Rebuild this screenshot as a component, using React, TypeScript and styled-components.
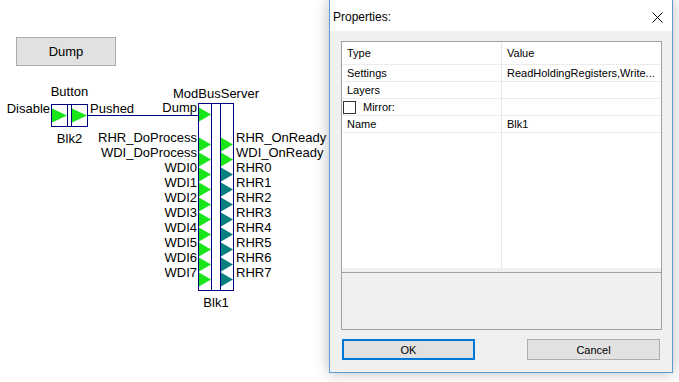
import styled, { createGlobalStyle } from "styled-components";

const GREEN = "#19e619";
const TEAL = "#088080";
const NAVY = "#000080";

const GlobalStyle = createGlobalStyle`
	html, body {
		margin: 0;
		padding: 0;
		background: #fff;
	}
	body {
		font-family: "Liberation Sans", Arial, sans-serif;
	}
`;

const Canvas = styled.div`
	position: relative;
	width: 679px;
	height: 382px;
	overflow: hidden;
	background: #fff;
	color: #000;
`;

const DumpButton = styled.button`
	position: absolute;
	left: 16px;
	top: 37px;
	width: 100px;
	height: 29px;
	padding: 0;
	background: #e1e1e1;
	border: 1px solid #adadad;
	color: #000;
	font: 13px "Liberation Sans", Arial, sans-serif;
`;

/* ---------- diagram blocks ---------- */

const BlockRoot = styled.div<{ $x: number; $y: number }>`
	position: absolute;
	left: ${p => p.$x}px;
	top: ${p => p.$y}px;
	font: 13px/15px "Liberation Sans", Arial, sans-serif;
	white-space: nowrap;
`;

const Caption = styled.div<{ $offset: number; $width: number; $gap?: number; $top?: number }>`
	display: flex;
	justify-content: center;
	height: 15px;
	width: ${p => p.$width}px;
	margin-left: ${p => p.$offset}px;
	margin-bottom: ${p => p.$gap ?? 0}px;
	margin-top: ${p => p.$top ?? 0}px;
`;

const Body = styled.div`
	display: flex;
	align-items: flex-start;
`;

const LabelCol = styled.div<{ $width?: number; $side: "left" | "right" }>`
	display: flex;
	flex-direction: column;
	width: ${p => (p.$width ? `${p.$width}px` : "auto")};
	text-align: ${p => p.$side === "left" ? "right" : "left"};
	margin-right: ${p => p.$side === "left" ? 1 : 0}px;
	margin-left: ${p => p.$side === "right" ? 2 : 0}px;
`;

const Label = styled.div`
	height: 15px;
`;

const Box = styled.div`
	display: flex;
	margin-top: 3px;
	border: 1px solid ${NAVY};
`;

const Cell = styled.div<{ $w: number; $divider?: boolean }>`
	display: flex;
	flex-direction: column;
	width: ${p => p.$w}px;
	padding: 3px 0;
	border-right: ${p => p.$divider ? `1px solid ${NAVY}` : "none"};
`;

const PinSlot = styled.div`
	display: flex;
	height: 15px;
`;

const Wire = styled.div`
	position: absolute;
	left: 87px;
	top: 115px;
	width: 111px;
	height: 1px;
	background: ${NAVY};
`;

type Pin = { label: string; color: string } | null;

const Triangle = ({ w, color }: { w: number; color: string }) => (
	<svg width={w} height={15} viewBox={`0 0 ${w} 15`}>
		<polygon points={`0,0.5 ${w},7.5 0,14.5`} fill={color} />
	</svg>
);

type BlockProps = {
	x: number;
	y: number;
	title: string;
	name: string;
	labelWidth: number;
	cols: [number, number, number];
	inputs: Pin[];
	outputs: Pin[];
	titleGap?: number;
};

const Block = ({ x, y, title, name, labelWidth, cols, inputs, outputs, titleGap }: BlockProps) => {
	const rows = Math.max(inputs.length, outputs.length);
	const boxWidth = cols[0] + cols[1] + cols[2] + 4;
	const offset = labelWidth + 1;
	const idx = Array.from({ length: rows }, (_, i) => i);

	return (
		<BlockRoot $x={x} $y={y}>
			<Caption $offset={offset} $width={boxWidth} $gap={titleGap}>{title}</Caption>
			<Body>
				<LabelCol $side="left" $width={labelWidth}>
					{idx.map(i => <Label key={i}>{inputs[i]?.label ?? ""}</Label>)}
				</LabelCol>
				<Box>
					<Cell $w={cols[0]} $divider>
						{idx.map(i => (
							<PinSlot key={i}>{inputs[i] && <Triangle w={cols[0]} color={inputs[i]!.color} />}</PinSlot>
						))}
					</Cell>
					<Cell $w={cols[1]} $divider />
					<Cell $w={cols[2]}>
						{idx.map(i => (
							<PinSlot key={i}>{outputs[i] && <Triangle w={cols[2]} color={outputs[i]!.color} />}</PinSlot>
						))}
					</Cell>
				</Box>
				<LabelCol $side="right">
					{idx.map(i => <Label key={i}>{outputs[i]?.label ?? ""}</Label>)}
				</LabelCol>
			</Body>
			<Caption $offset={offset} $width={boxWidth} $top={4}>{name}</Caption>
		</BlockRoot>
	);
};

const green = (label: string): Pin => ({ label, color: GREEN });
const teal = (label: string): Pin => ({ label, color: TEAL });

const modbusInputs: Pin[] = [
	green("Dump"),
	null,
	green("RHR_DoProcess"),
	green("WDI_DoProcess"),
	...Array.from({ length: 8 }, (_, i) => green(`WDI${i}`)),
];

const modbusOutputs: Pin[] = [
	null,
	null,
	green("RHR_OnReady"),
	green("WDI_OnReady"),
	...Array.from({ length: 8 }, (_, i) => teal(`RHR${i}`)),
];

/* ---------- properties dialog ---------- */

const Window = styled.div`
	position: absolute;
	left: 329px;
	top: -1px;
	width: 344px;
	height: 374px;
	box-sizing: border-box;
	display: flex;
	flex-direction: column;
	background: #f0f0f0;
	border: 1px solid #5b9bd5;
	box-shadow: 0 0 14px rgba(0, 0, 0, 0.28);
	font-family: "Liberation Sans", Arial, sans-serif;
`;

const TitleBar = styled.div`
	display: flex;
	align-items: center;
	justify-content: space-between;
	height: 31px;
	box-sizing: border-box;
	padding: 3px 0 0 3px;
	background: #fff;
	font-size: 12px;
`;

const CloseBtn = styled.div`
	display: flex;
	align-items: center;
	justify-content: center;
	width: 30px;
	height: 28px;
`;

const WinBody = styled.div`
	flex: 1;
	display: flex;
	flex-direction: column;
	padding: 10px 10px 12px 11px;
`;

const Panel = styled.div`
	display: flex;
	flex-direction: column;
	height: 289px;
	box-sizing: border-box;
	border: 1px solid #a0a0a0;
	background: #f0f0f0;
`;

const PropGrid = styled.div`
	display: grid;
	grid-template-columns: 159px 1fr;
	align-content: start;
	height: 226px;
	background: linear-gradient(#e6e6e6, #e6e6e6) 159px 0 / 1px 100% no-repeat, #fff;
	font-size: 11px;
`;

const PropCell = styled.div<{ $head?: boolean; $value?: boolean; $tight?: boolean }>`
	display: flex;
	align-items: center;
	gap: 7px;
	height: ${p => p.$head ? 22 : 16}px;
	padding-left: ${p => p.$tight ? 1 : p.$value ? 6 : 5}px;
	border-bottom: 1px solid #ececec;
	white-space: nowrap;
	overflow: hidden;
`;

const CheckBox = styled.span`
	width: 13px;
	height: 13px;
	box-sizing: border-box;
	border: 1px solid #333;
	background: #fff;
`;

const Description = styled.div`
	flex: 1;
	margin-top: 4px;
	border-top: 1px solid #a0a0a0;
`;

const Footer = styled.div`
	display: flex;
	justify-content: space-between;
	margin-top: 9px;
	padding: 0 2px 0 1px;
`;

const DlgButton = styled.button<{ $default?: boolean }>`
	width: 133px;
	height: 21px;
	padding: 0;
	box-sizing: border-box;
	background: #e1e1e1;
	border: ${p => p.$default ? "2px solid #0078d7" : "1px solid #adadad"};
	color: #000;
	font: 11px "Liberation Sans", Arial, sans-serif;
`;

const props: [string, string][] = [
	["Settings", "ReadHoldingRegisters,Write..."],
	["Layers", ""],
];

export default function App() {
	return (
		<Canvas>
			<GlobalStyle />
			<DumpButton>Dump</DumpButton>

			<Block
				x={2}
				y={84}
				title="Button"
				name="Blk2"
				labelWidth={48}
				cols={[15, 3, 15]}
				inputs={[green("Disable")]}
				outputs={[green("Pushed")]}
				titleGap={2}
			/>
			<Wire />
			<Block
				x={86}
				y={86}
				title="ModBusServer"
				name="Blk1"
				labelWidth={111}
				cols={[12, 8, 12]}
				inputs={modbusInputs}
				outputs={modbusOutputs}
				titleGap={-1}
			/>

			<Window>
				<TitleBar>
					<span>Properties:</span>
					<CloseBtn>
						<svg width="11" height="11" viewBox="0 0 11 11">
							<path d="M0.5 0.5 L10.5 10.5 M10.5 0.5 L0.5 10.5" stroke="#000" strokeWidth="1" />
						</svg>
					</CloseBtn>
				</TitleBar>
				<WinBody>
					<Panel>
						<PropGrid>
							<PropCell $head>Type</PropCell>
							<PropCell $head $value>Value</PropCell>
							{props.map(([k, v]) => [
								<PropCell key={k}>{k}</PropCell>,
								<PropCell key={k + "v"} $value>{v}</PropCell>,
							])}
							<PropCell $tight><CheckBox />Mirror:</PropCell>
							<PropCell $value />
							<PropCell>Name</PropCell>
							<PropCell $value>Blk1</PropCell>
						</PropGrid>
						<Description />
					</Panel>
					<Footer>
						<DlgButton $default>OK</DlgButton>
						<DlgButton>Cancel</DlgButton>
					</Footer>
				</WinBody>
			</Window>
		</Canvas>
	);
}
